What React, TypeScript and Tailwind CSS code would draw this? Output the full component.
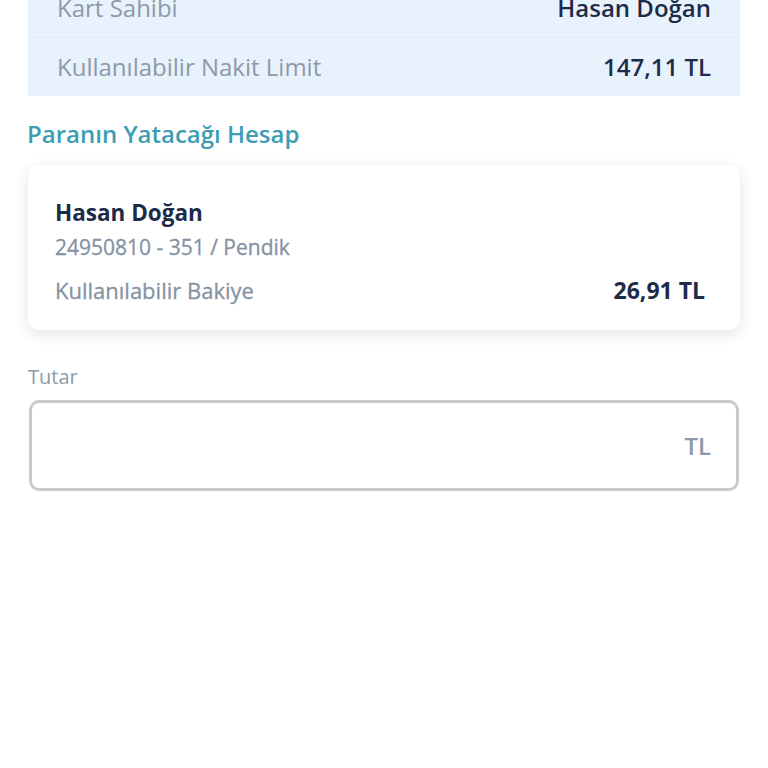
const font = { fontFamily: '"Open Sans", "Noto Sans", sans-serif' };

const App = () => {
  return (
    <main className="min-h-[768px] w-[768px] bg-white overflow-hidden" style={font}>
      <div className="mx-7 -mt-[21px] bg-[#e8f2fd]">
        <div className="flex h-[59px] items-center justify-between px-[29px] border-b border-[#dfeaf7]">
          <span className="text-[24px] text-[#8d99a8]">Kart Sahibi</span>
          <span className="text-[24px] font-semibold text-[#1c2c48]">Hasan Doğan</span>
        </div>
        <div className="flex h-[58px] items-center justify-between px-[29px]">
          <span className="text-[24px] text-[#8d99a8]">Kullanılabilir Nakit Limit</span>
          <span className="text-[24px] font-semibold text-[#1c2c48]">147,11 TL</span>
        </div>
      </div>

      <h2 className="mx-[27px] mt-[23px] text-[24px] font-semibold text-[#3c9db3] leading-[30px]">
        Paranın Yatacağı Hesap
      </h2>

      <div className="mx-7 mt-[16px] h-[165px] rounded-[10px] bg-white px-[27px] pt-[33px] shadow-[0_4px_14px_rgba(30,40,60,0.12)]">
        <div className="text-[22.5px] font-bold text-[#1c2c48] leading-[30px]">Hasan Doğan</div>
        <div className="mt-[5px] text-[21px] text-[#8592a3] leading-[28px] [-webkit-text-stroke:0.3px_#8592a3]">
          24950810 - 351 / Pendik
        </div>
        <div className="mt-[14px] flex items-center justify-between pr-[8px]">
          <span className="text-[22px] text-[#8592a3] leading-[28px] [-webkit-text-stroke:0.3px_#8592a3]">
            Kullanılabilir Bakiye
          </span>
          <span className="text-[23px] font-bold text-[#1c2c48] leading-[30px]">26,91 TL</span>
        </div>
      </div>

      <div className="mx-7 mt-[34px] text-[20px] text-[#8d99a8] leading-[26px]">Tutar</div>
      <div className="mx-[29px] mt-[10px] flex h-[91px] items-center justify-end rounded-[10px] border-[3px] border-[#c6c9ce] pr-[25px]">
        <span className="text-[24px] font-semibold text-[#8d99a8]">TL</span>
      </div>
    </main>
  );
};

export default App;
